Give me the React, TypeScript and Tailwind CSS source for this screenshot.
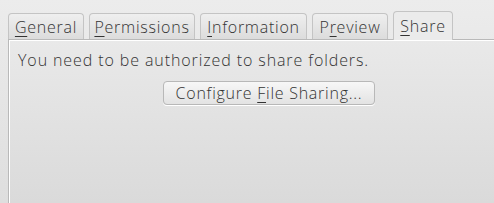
import React from "react";

const tabs = [
  { pre: "", key: "G", post: "eneral", w: "w-[76px]" },
  { pre: "", key: "P", post: "ermissions", w: "w-[106px]" },
  { pre: "", key: "I", post: "nformation", w: "w-[107px]" },
  { pre: "P", key: "r", post: "eview", w: "w-[76px]" },
];

const Mn = ({ c }: { c: string }) => (
  <span className="underline decoration-1 underline-offset-[3px]">{c}</span>
);

export default function App() {
  return (
    <div
      className="w-[494px] h-[203px] overflow-hidden bg-gradient-to-b from-[#ececec] to-[#dedede] text-[#333333] font-light"
      style={{ fontFamily: '"Open Sans", "DejaVu Sans", sans-serif' }}
    >
      {/* tab bar */}
      <div className="flex items-end h-[39px] pl-[8px] gap-[5px]">
        {tabs.map((t) => (
          <div
            key={t.key}
            className={`${t.w} h-[26px] flex items-center justify-center rounded-t-[4px] border border-b-0 border-[#c4c4c4] bg-gradient-to-b from-[#efefef] to-[#dcdcdc] text-[16px] leading-none tracking-[0.75px]`}
          >
            {t.pre}
            <Mn c={t.key} />
            {t.post}
          </div>
        ))}
        <div className="w-[60px] h-[29px] -mb-[1px] flex items-center justify-center rounded-t-[4px] border border-b-0 border-[#c4c4c4] bg-[#ebebeb] text-[16px] leading-none tracking-[0.75px] relative z-10">
          <Mn c="S" />
          hare
        </div>
      </div>

      {/* pane */}
      <div className="ml-[8px] h-[164px] border-l border-t border-[#b9b9b9] bg-gradient-to-b from-[#e9e9e9] to-[#dadada] shadow-[inset_1px_1px_0_#ffffff] pl-[9px] pt-[9px]">
        <div className="text-[16px] leading-[22px] tracking-[0.9px]">
          You need to be authorized to share folders.
        </div>
        <div className="flex pl-[145px] pt-[10px]">
          <button className="w-[212px] h-[24px] rounded-[4px] border border-[#b8b8b8] bg-gradient-to-b from-[#f7f7f7] to-[#e3e3e3] shadow-[0_1px_0_#ffffff] text-[16px] leading-none tracking-[0.75px] text-[#333333]">
            Configure <Mn c="F" />ile Sharing...
          </button>
        </div>
      </div>
    </div>
  );
}
